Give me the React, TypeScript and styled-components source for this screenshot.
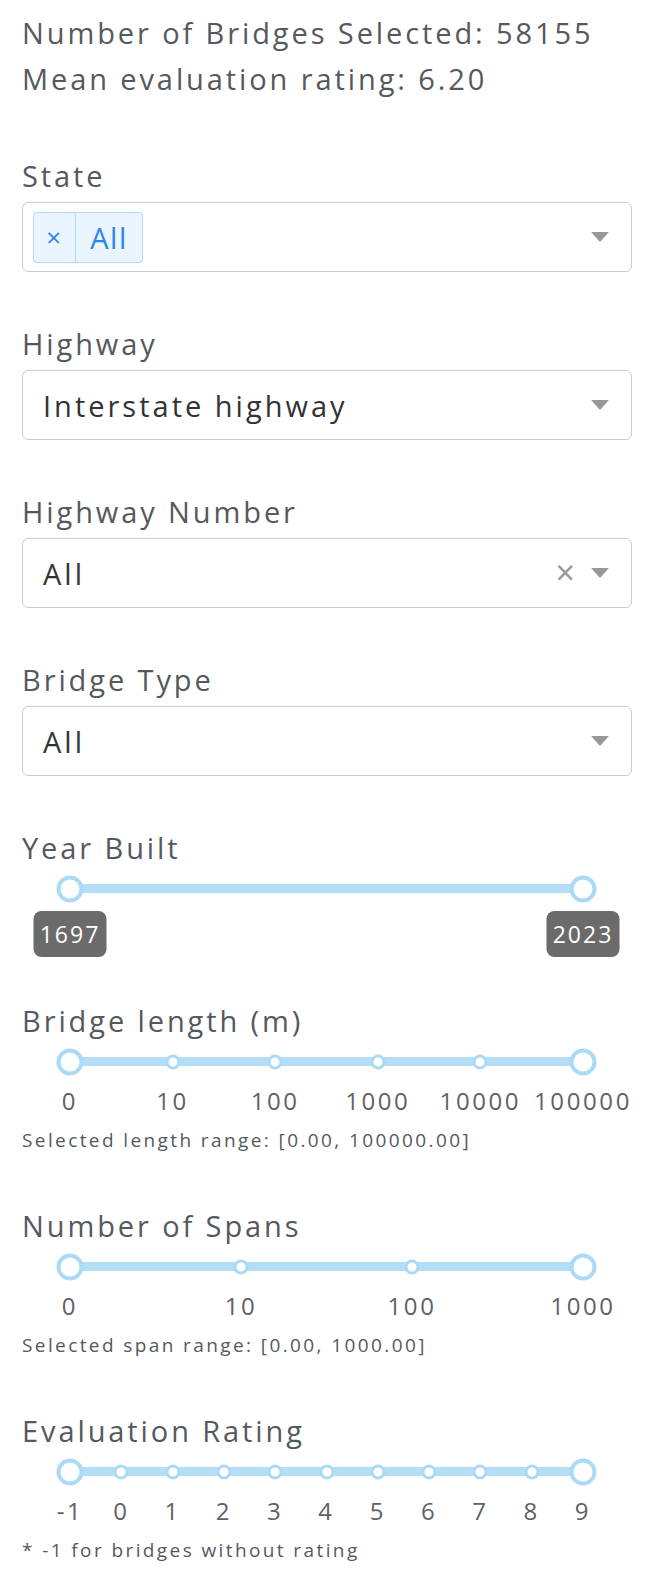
import styled, { createGlobalStyle } from 'styled-components';

const GlobalStyle = createGlobalStyle`
  body {
    margin: 0;
    background: #ffffff;
    font-family: "Open Sans", Lato, "Liberation Sans", sans-serif;
    color: #55595e;
  }
`;

const Page = styled.div`
  padding: 10px 18px 30px 22px;
  display: flex;
  flex-direction: column;
`;

const Summary = styled.div`
  font-size: 29px;
  line-height: 46px;
  letter-spacing: 2.9px;
  margin-bottom: 54px;
`;

const Section = styled.div<{ $gap?: number }>`
  display: flex;
  flex-direction: column;
  margin-bottom: ${({ $gap }) => $gap ?? 52}px;
`;

const Label = styled.div`
  font-size: 29px;
  line-height: 40px;
  letter-spacing: 2.9px;
`;

const SelectBox = styled.div<{ $multi?: boolean }>`
  margin-top: 6px;
  height: 70px;
  box-sizing: border-box;
  border: 1px solid #cccccc;
  border-radius: 6px;
  display: flex;
  align-items: center;
  padding: 0 22px 0 ${({ $multi }) => ($multi ? '10px' : '20px')};
  gap: 16px;
`;

const SelectValue = styled.div`
  flex: 1;
  font-size: 29px;
  letter-spacing: 3px;
  color: #333333;
`;

const Chip = styled.div`
  display: flex;
  height: 51px;
  box-sizing: border-box;
  background: rgba(0, 126, 255, 0.08);
  border: 1px solid rgba(0, 126, 255, 0.24);
  border-radius: 4px;
  color: #2b85f0;
  font-size: 29px;
  letter-spacing: 1.5px;
`;

const ChipRemove = styled.span`
  width: 41px;
  display: flex;
  align-items: center;
  justify-content: center;
  border-right: 1px solid rgba(0, 126, 255, 0.24);
  font-size: 26px;
`;

const ChipLabel = styled.span`
  width: 66px;
  display: flex;
  align-items: center;
  justify-content: center;
`;

const Spacer = styled.div`
  flex: 1;
`;

const ClearIcon = styled.span`
  color: #999999;
  font-size: 34px;
  line-height: 1;
  margin-top: -2px;
`;

const Caret = styled.span`
  width: 0;
  height: 0;
  border-style: solid;
  border-width: 10px 9px 0 9px;
  border-color: #999999 transparent transparent transparent;
`;

const Rail = styled.div`
  position: relative;
  height: 9px;
  margin: 16px 49px 0 48px;
  background: #b3def6;
  border-radius: 5px;
`;

const Knob = styled.span<{ $big?: boolean }>`
  position: absolute;
  top: 50%;
  transform: translate(-50%, -50%);
  box-sizing: border-box;
  width: ${({ $big }) => ($big ? '27px' : '15px')};
  height: ${({ $big }) => ($big ? '27px' : '15px')};
  border-radius: 50%;
  background: #ffffff;
  border: ${({ $big }) => ($big ? '4px' : '3px')} solid #abdaf6;
`;

const TipRow = styled.div`
  position: relative;
  height: 46px;
  margin: 18px 49px 0 48px;
`;

const Tip = styled.span`
  position: absolute;
  top: 0;
  transform: translateX(-50%);
  width: 73px;
  height: 46px;
  border-radius: 8px;
  background: #6b6b6b;
  color: #ffffff;
  font-size: 23px;
  letter-spacing: 2px;
  display: flex;
  align-items: center;
  justify-content: center;
`;

const MarkRow = styled.div`
  position: relative;
  height: 30px;
  margin: 20px 49px 0 48px;
`;

const Mark = styled.span`
  position: absolute;
  top: 0;
  transform: translateX(-50%);
  font-size: 24px;
  line-height: 30px;
  letter-spacing: 2.6px;
  color: #5f6164;
  white-space: nowrap;
`;

const Note = styled.div`
  margin-top: 12px;
  font-size: 19px;
  line-height: 24px;
  letter-spacing: 2.4px;
  color: #55595e;
`;

type SliderProps = {
  label: string;
  marks: string[];
  tips?: string[];
  note?: string;
};

function RangeSlider({ label, marks, tips, note }: SliderProps) {
  const step = marks.length > 1 ? 100 / (marks.length - 1) : 100;
  return (
    <Section $gap={tips ? 44 : 54}>
      <Label>{label}</Label>
      <Rail>
        {marks.map((m, i) => (
          <Knob
            key={m + i}
            $big={i === 0 || i === marks.length - 1}
            style={{ left: `${i * step}%` }}
          />
        ))}
      </Rail>
      {tips ? (
        <TipRow>
          {tips.map((t, i) => (
            <Tip key={t} style={{ left: `${i * 100}%` }}>
              {t}
            </Tip>
          ))}
        </TipRow>
      ) : (
        <MarkRow>
          {marks.map((m, i) => (
            <Mark key={m + i} style={{ left: `${i * step}%` }}>
              {m}
            </Mark>
          ))}
        </MarkRow>
      )}
      {note ? <Note>{note}</Note> : null}
    </Section>
  );
}

export default function App() {
  return (
    <>
      <GlobalStyle />
      <Page>
        <Summary>
          <div>Number of Bridges Selected: 58155</div>
          <div>Mean evaluation rating: 6.20</div>
        </Summary>

        <Section>
          <Label>State</Label>
          <SelectBox $multi>
            <Chip>
              <ChipRemove>×</ChipRemove>
              <ChipLabel>All</ChipLabel>
            </Chip>
            <Spacer />
            <Caret />
          </SelectBox>
        </Section>

        <Section>
          <Label>Highway</Label>
          <SelectBox>
            <SelectValue>Interstate highway</SelectValue>
            <Caret />
          </SelectBox>
        </Section>

        <Section>
          <Label>Highway Number</Label>
          <SelectBox>
            <SelectValue>All</SelectValue>
            <ClearIcon>×</ClearIcon>
            <Caret />
          </SelectBox>
        </Section>

        <Section>
          <Label>Bridge Type</Label>
          <SelectBox>
            <SelectValue>All</SelectValue>
            <Caret />
          </SelectBox>
        </Section>

        <RangeSlider label="Year Built" marks={['1697', '2023']} tips={['1697', '2023']} />

        <RangeSlider
          label="Bridge length (m)"
          marks={['0', '10', '100', '1000', '10000', '100000']}
          note="Selected length range: [0.00, 100000.00]"
        />

        <RangeSlider
          label="Number of Spans"
          marks={['0', '10', '100', '1000']}
          note="Selected span range: [0.00, 1000.00]"
        />

        <RangeSlider
          label="Evaluation Rating"
          marks={['-1', '0', '1', '2', '3', '4', '5', '6', '7', '8', '9']}
          note="* -1 for bridges without rating"
        />
      </Page>
    </>
  );
}
